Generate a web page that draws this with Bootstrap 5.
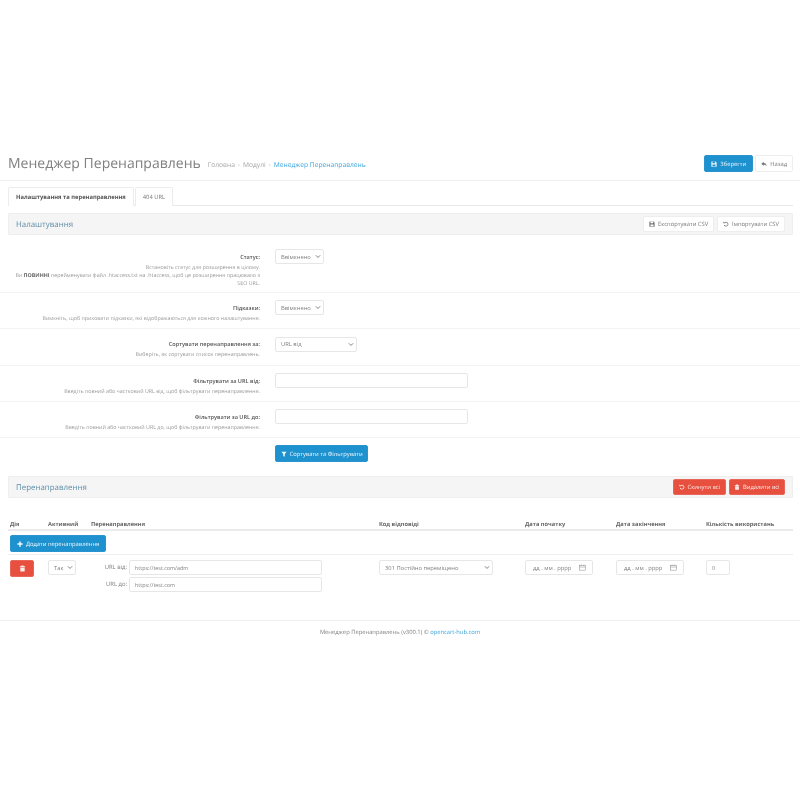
<!DOCTYPE html>
<html lang="uk">
<head>
<meta charset="utf-8">
<title>Менеджер Перенаправлень</title>
<link href="https://cdn.jsdelivr.net/npm/bootstrap@5.3.0/dist/css/bootstrap.min.css" rel="stylesheet">
<style>
body{font-family:"Open Sans","Noto Sans",sans-serif;font-size:5.8px;line-height:1.3;color:#777;background:#fff;text-rendering:geometricPrecision}
.page-wrap{padding-top:155px;filter:blur(.3px)}
.head-bar{padding:0 7px 8px 8px;border-bottom:1px solid #f0f0f0;height:26px}
.head-title{font-size:14px;font-weight:400;color:#808080;margin:0;line-height:17px}
.crumbs{font-size:6.7px;color:#a5a5a5;margin-left:7px;padding-top:4px}
.crumbs b{font-weight:400;color:#ccc;margin:0 3px}
.crumbs a,.foot-line a{color:#3aa3da;text-decoration:none}
.act-btn{font-size:5.8px;line-height:8px;padding:4px 6px;border-radius:2px;height:17px;display:inline-flex;align-items:center;gap:3px;white-space:nowrap;text-decoration:none}
.act-blue{background:#1e91cf;border:1px solid #2a94cf;color:#f2f9fd}
.act-white{background:#fff;border:1px solid #eee;color:#777}
.act-red{background:#e74f3f;border:1px solid #e8675a;color:#fbeceb}
.act-btn svg{width:6px;height:6px;fill:currentColor;flex:none}
.act-small{height:16px}
.act-tight{padding-left:5px;padding-right:5px}
.act-tighter{padding-left:4.500px;padding-right:4.500px}
.tab-strip{margin:6px 7px 0 8px;border-bottom:1px solid #e8e8e8;gap:1px;height:19px}
.tab-strip .nav-link{font-size:5.8px;line-height:8px;padding:5px 7px;height:19px;border:1px solid #ececec;border-bottom:0;border-radius:2px 2px 0 0;color:#777;background:#fff;margin:0}
.tab-strip .nav-link.active{font-weight:700;color:#555;border-color:#ececec;background:#fff;height:19px}
.band{margin:7px 7px 0 8px;height:22px;background:#f5f5f5;border:1px solid #eee;padding:0 7px;border-radius:1px}
.band-title{font-size:7.9px;color:#5f8ea8;font-weight:400;margin:0;padding-top:3px}
.btn-pair{gap:3px}
.head-bar .btn-pair{gap:2px}
.set-row{display:flex;border-bottom:1px solid #f3f3f3;height:36.3px}
.set-left{width:267px;padding:11px 7px 0 15px;text-align:right;flex:none}
.set-left strong{display:block;font-weight:600;color:#555;font-size:5.6px;line-height:8px;margin-bottom:2px}
.set-left span{color:#999;font-size:5.3px;line-height:8px;display:block}
.set-left span em{font-style:normal;font-weight:700;color:#666}
.set-right{padding:7.4px 0 0 8px}
.set-first{height:58px}
.set-first .set-left{padding-top:18px}
.set-first .set-right{padding-top:14px}
.fld.form-select,.fld.form-control{font-size:5.8px;line-height:8px;color:#808080;border:1px solid #e6e6e6;border-radius:2px;padding:2px 5px;height:15px;min-height:0}
.fld.form-select{padding-right:10px;background-size:6px 5px;background-position:right 2px center}
.fld.form-control[type=text]{font-size:5.4px}
.w-49{width:49px}.w-82{width:82px}.w-193{width:193px}.w-28{width:28px}.w-114{width:114px}.w-24{width:24px}.w-68{width:68px}
.submit-line{padding:7px 0 0 275px;height:38px}
.grid-zone{margin:21px 7px 0 8px}
.tbl{table-layout:fixed;width:785px;margin:0;border-collapse:collapse}
.tbl th{font-size:5.7px;font-weight:700;color:#666;line-height:8px;padding:0 0 1px;height:11px;border-bottom:2px solid #ebebeb;white-space:nowrap}
.tbl td{padding:5px 0;border-bottom:1px solid #eee;vertical-align:top}
.tbl tr:last-child td{border-bottom:0;padding:5px 0 0}
.pad-l{padding-left:2px!important}
.add-cell{padding-top:4px!important;padding-bottom:2px!important}
.c1{width:40px}.c2{width:43px}.c3{width:288px}.c4{width:146px}.c5{width:91px}.c6{width:90px}
.trash-btn{width:24px;padding:0;justify-content:center}
.trash-btn svg{width:7px;height:7px}
.url-line{display:flex;align-items:center;justify-content:flex-end;width:231px;gap:2px;margin-bottom:2px;color:#808080;font-size:5.9px}
.dt{display:flex;align-items:center;justify-content:space-between;padding-left:7px!important;padding-right:6px!important}
.dt span{white-space:nowrap}
.dt svg{width:7px;height:7px;stroke:#777;fill:none}
.foot-line{margin-top:26px;border-top:1px solid #f0f0f0;text-align:center;padding-top:8px;font-size:5.8px;color:#808080}
</style>
</head>
<body>
<div class="page-wrap">
  <div class="head-bar d-flex justify-content-between align-items-start">
    <div class="d-flex align-items-center">
      <h1 class="head-title">Менеджер Перенаправлень</h1>
      <div class="crumbs">Головна<b>›</b>Модулі<b>›</b><a href="#">Менеджер Перенаправлень</a></div>
    </div>
    <div class="d-flex btn-pair">
      <a class="act-btn act-blue" href="#"><svg viewBox="0 0 16 16"><path d="M2 1h10l3 3v11H1V2zm2 1v4h7V2zm0 7v5h8V9z"/></svg>Зберегти</a>
      <a class="act-btn act-white act-tight" href="#"><svg viewBox="0 0 16 16"><path d="M7 2v3c5 0 8 3 8 9-2-3-4-4-8-4v3L1 7.500z"/></svg>Назад</a>
    </div>
  </div>

  <ul class="nav nav-tabs tab-strip">
    <li class="nav-item"><a class="nav-link active" href="#">Налаштування та перенаправлення</a></li>
    <li class="nav-item"><a class="nav-link" href="#">404 URL</a></li>
  </ul>

  <div class="band d-flex justify-content-between align-items-center">
    <h3 class="band-title">Налаштування</h3>
    <div class="d-flex btn-pair">
      <a class="act-btn act-white act-small act-tight" href="#"><svg viewBox="0 0 16 16"><path d="M2 1h10l3 3v11H1V2zm2 1v4h7V2zm0 7v5h8V9z"/></svg>Експортувати CSV</a>
      <a class="act-btn act-white act-small act-tight" href="#"><svg viewBox="0 0 16 16"><path d="M1 1l5 5H1zM3.500 4.500A6 6 0 1 1 2.500 11l2-1A4 4 0 1 0 5 6z"/></svg>Імпортувати CSV</a>
    </div>
  </div>

  <div class="set-row set-first">
    <div class="set-left"><strong>Статус:</strong><span>Встановіть статус для розширення в цілому.<br>Ви <em>ПОВИННІ</em> перейменувати файл .htaccess.txt на .htaccess, щоб це розширення працювало з<br>SEO URL.</span></div>
    <div class="set-right"><select class="form-select fld w-49"><option>Ввімкнено</option></select></div>
  </div>
  <div class="set-row">
    <div class="set-left"><strong>Підказки:</strong><span>Вимкніть, щоб приховати підказки, які відображаються для кожного налаштування.</span></div>
    <div class="set-right"><select class="form-select fld w-49"><option>Ввімкнено</option></select></div>
  </div>
  <div class="set-row">
    <div class="set-left"><strong>Сортувати перенаправлення за:</strong><span>Виберіть, як сортувати список перенаправлень.</span></div>
    <div class="set-right"><select class="form-select fld w-82"><option>URL від</option></select></div>
  </div>
  <div class="set-row">
    <div class="set-left"><strong>Фільтрувати за URL від:</strong><span>Введіть повний або частковий URL від, щоб фільтрувати перенаправлення.</span></div>
    <div class="set-right"><input class="form-control fld w-193" type="text"></div>
  </div>
  <div class="set-row">
    <div class="set-left"><strong>Фільтрувати за URL до:</strong><span>Введіть повний або частковий URL до, щоб фільтрувати перенаправлення.</span></div>
    <div class="set-right"><input class="form-control fld w-193" type="text"></div>
  </div>
  <div class="submit-line">
    <a class="act-btn act-blue act-tighter" href="#"><svg viewBox="0 0 16 16"><path d="M1 2h14L10 8v7l-4-2V8z"/></svg>Сортувати та Фільтрувати</a>
  </div>

  <div class="band d-flex justify-content-between align-items-center mt-0">
    <h3 class="band-title">Перенаправлення</h3>
    <div class="d-flex btn-pair">
      <a class="act-btn act-red act-small act-tighter" href="#"><svg viewBox="0 0 16 16"><path d="M1 1l5 5H1zM3.500 4.500A6 6 0 1 1 2.500 11l2-1A4 4 0 1 0 5 6z"/></svg>Скинути всі</a>
      <a class="act-btn act-red act-small act-tighter" href="#"><svg viewBox="0 0 16 16"><path d="M6 1h4l1 2h3v2H2V3h3zM3 6h10v9H3z"/></svg>Видалити всі</a>
    </div>
  </div>

  <div class="grid-zone">
    <table class="tbl">
      <colgroup><col class="c1"><col class="c2"><col class="c3"><col class="c4"><col class="c5"><col class="c6"><col></colgroup>
      <thead>
        <tr><th class="pad-l">Дія</th><th>Активний</th><th>Перенаправлення</th><th>Код відповіді</th><th>Дата початку</th><th>Дата закінчення</th><th>Кількість використань</th></tr>
      </thead>
      <tbody>
        <tr><td colspan="7" class="pad-l add-cell"><a class="act-btn act-blue" href="#"><svg viewBox="0 0 16 16"><path d="M6 1h4v5h5v4h-5v5H6v-5H1V6h5z"/></svg>Додати перенаправлення</a></td></tr>
        <tr>
          <td class="pad-l"><a class="act-btn act-red trash-btn" href="#"><svg viewBox="0 0 16 16"><path d="M6 1h4l1 2h3v2H2V3h3zM3 6h10v9H3z"/></svg></a></td>
          <td><select class="form-select fld w-28"><option>Так</option></select></td>
          <td>
            <div class="url-line"><span>URL від:</span><input class="form-control fld w-193" type="text" value="https://test.com/adm"></div>
            <div class="url-line"><span>URL до:</span><input class="form-control fld w-193" type="text" value="https://test.com"></div>
          </td>
          <td><select class="form-select fld w-114"><option>301 Постійно переміщено</option></select></td>
          <td><div class="form-control fld dt w-68"><span>дд . мм . рррр</span><svg viewBox="0 0 16 16"><rect x="1.500" y="3" width="13" height="11"/><path d="M1.500 7h13M5 1v3M11 1v3"/></svg></div></td>
          <td><div class="form-control fld dt w-68"><span>дд . мм . рррр</span><svg viewBox="0 0 16 16"><rect x="1.500" y="3" width="13" height="11"/><path d="M1.500 7h13M5 1v3M11 1v3"/></svg></div></td>
          <td><input class="form-control fld w-24" type="text" value="0"></td>
        </tr>
      </tbody>
    </table>
  </div>

  <div class="foot-line">Менеджер Перенаправлень (v300.1) © <a href="#">opencart-hub.com</a></div>
</div>
<script src="https://cdn.jsdelivr.net/npm/bootstrap@5.3.0/dist/js/bootstrap.bundle.min.js"></script>
</body>
</html>
